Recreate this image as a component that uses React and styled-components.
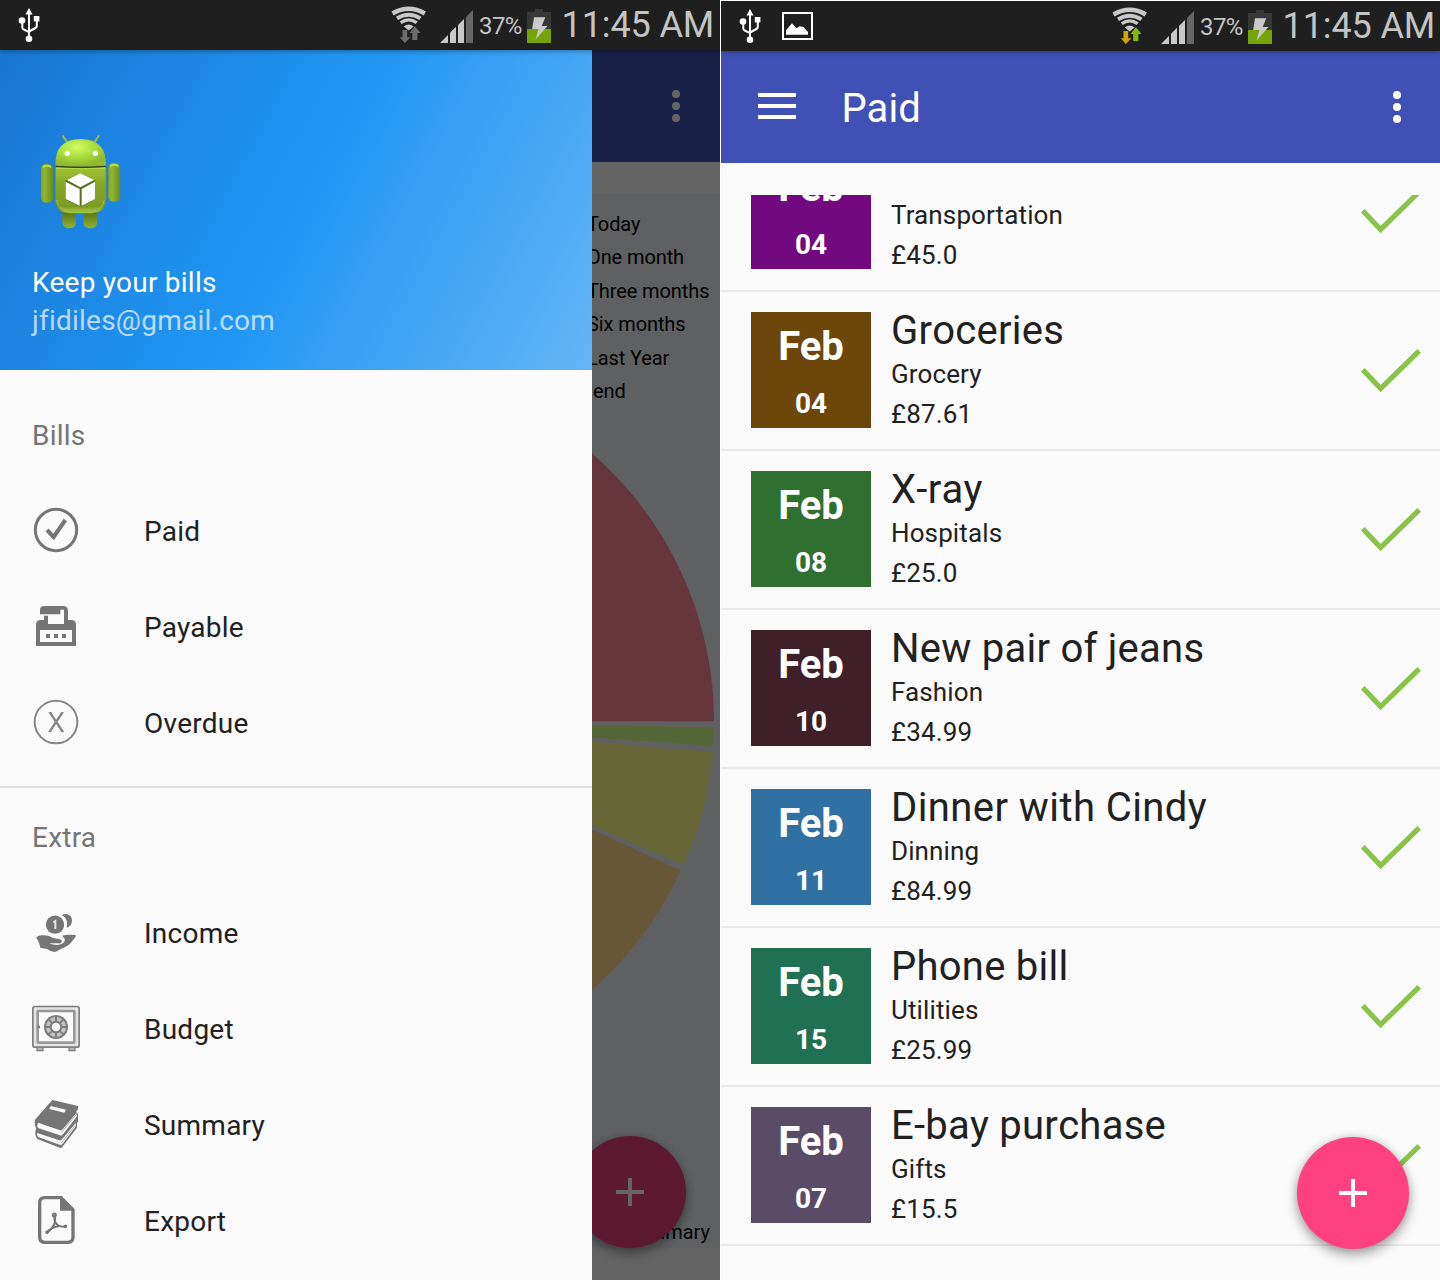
import React from "react";
import styled, { createGlobalStyle } from "styled-components";

const GlobalStyle = createGlobalStyle`
  *, *::before, *::after { box-sizing: border-box; }
  body { margin: 0; background: #fff; font-family: Roboto, "Noto Sans", sans-serif; color: #212121; }
  svg { display: block; flex: none; }
`;

const Screens = styled.main`
  display: grid;
  grid-template-columns: 720px 719px;
  column-gap: 1px;
  width: 1440px;
  height: 1280px;
  overflow: hidden;
  background: #fff;
`;

const Phone = styled.section`
  position: relative;
  display: flex;
  flex-direction: column;
  height: ${(p) => 1280 - (p.$top || 0)}px;
  margin-top: ${(p) => p.$top || 0}px;
  overflow: hidden;
  background: #fafafa;
`;

const StatusBarRoot = styled.header`
  position: relative;
  z-index: 5;
  flex: none;
  display: flex;
  align-items: flex-start;
  width: 720px;
  height: 50px;
  background: #1f1f1f;
  color: #c4c4c4;
  box-shadow: 0 1px 5px rgba(0, 0, 0, 0.35);
`;

const StatusRight = styled.div`
  display: flex;
  margin-left: auto;
  width: 330px;
`;

const Percent = styled.span`
  width: 48px;
  padding: 12px 0 0 5px;
  font-size: 24px;
  line-height: 28px;
  letter-spacing: -0.6px;
`;

const Clock = styled.span`
  padding: 4px 0 0 9.5px;
  font-size: 36px;
  line-height: 42px;
  letter-spacing: -0.1px;
  white-space: nowrap;
`;

const Toolbar = styled.div`
  flex: none;
  display: flex;
  align-items: center;
  width: 720px;
  height: 112px;
  padding: 0 40px 0 37px;
  background: #3f51b5;
  color: #fff;
`;

const ToolbarTitle = styled.h1`
  margin: 2px 0 0 45.5px;
  font-size: 40px;
  line-height: 47px;
  font-weight: 400;
  letter-spacing: 0.1px;
`;

const MoreDots = styled.span`
  display: grid;
  gap: 4px;
  margin-left: auto;
  i { width: 8px; height: 8px; border-radius: 50%; background: #fff; }
`;

const SummaryCard = styled.div`
  display: flex;
  flex-direction: column;
  height: 1054px;
  margin-top: 32px;
  background: #eef1f4;
`;

const Legend = styled.ul`
  list-style: none;
  margin: 0;
  padding: 14px 0 0 587px;
  height: 258px;
  font-size: 20px;
  line-height: 33.4px;
  letter-spacing: -0.1px;
  color: #000;
  white-space: nowrap;
`;

const LegendItem = styled.li`
  padding-left: ${(p) => p.$indent || 0}px;
`;

const ChartCaption = styled.p`
  margin: auto 10px 4px auto;
  font-size: 20px;
  line-height: 24px;
  color: #000;
`;

const Scrim = styled.div`
  position: absolute;
  inset: 50px 0 0 0;
  z-index: 3;
  background: rgba(0, 0, 0, 0.6);
`;

const Drawer = styled.nav`
  position: absolute;
  left: 0;
  top: 50px;
  bottom: 0;
  z-index: 4;
  width: 592px;
  background: #fafafa;
`;

const DrawerHeader = styled.div`
  display: flex;
  flex-direction: column;
  height: 320px;
  padding: 82px 32px 0;
  background: linear-gradient(118.4deg, #1976d2 0%, #2196f3 50%, #64b5f6 100%);
  font-size: 28px;
  line-height: 38px;
  letter-spacing: 0.24px;
  color: #fff;
`;

const AccountName = styled.div`
  margin-top: 30px;
`;

const AccountMail = styled.div`
  color: rgba(255, 255, 255, 0.7);
`;

const MenuGroup = styled.div`
  padding: ${(p) => (p.$first ? "16px 0" : "0")};
  border-bottom: ${(p) => (p.$first ? "2px solid #e0e0e0" : "0")};
`;

const GroupLabel = styled.h2`
  margin: 0;
  height: 96px;
  padding: 2px 32px 0;
  font-size: 28px;
  font-weight: 400;
  line-height: 96px;
  letter-spacing: 0.24px;
  color: #757575;
`;

const MenuItem = styled.a`
  display: flex;
  align-items: center;
  gap: 64px;
  height: 96px;
  padding: 0 32px;
  font-size: 28px;
  line-height: 33px;
  letter-spacing: 0.24px;
  span { padding-top: 3px; }
`;

const FabButton = styled.button`
  position: absolute;
  left: ${(p) => p.$x}px;
  top: 1136px;
  z-index: 2;
  display: grid;
  place-items: center;
  width: 112px;
  height: 112px;
  padding: 0;
  border: 0;
  border-radius: 50%;
  background: ${(p) => p.$color};
  box-shadow: 0 6px 12px rgba(0, 0, 0, 0.32), 0 0 10px rgba(0, 0, 0, 0.14);
`;

const BillList = styled.ul`
  flex: 1;
  min-height: 0;
  margin: 32px 0 0;
  padding: 0;
  list-style: none;
  overflow: hidden;
`;

const BillRow = styled.li`
  display: flex;
  height: 159px;
  padding: 20px 18px 0 30px;
  border-bottom: 2px solid #ece7e9;
  &:first-child { margin-top: -62px; }
`;

const DateTile = styled.div`
  width: 120px;
  height: 116px;
  padding-top: 11px;
  background: ${(p) => p.$color};
  color: #fff;
  font-weight: 700;
  text-align: center;
`;

const Month = styled.div`
  font-size: 40px;
  line-height: 47px;
`;

const Day = styled.div`
  margin-top: 17px;
  font-size: 28px;
  line-height: 33px;
`;

const BillText = styled.div`
  flex: 1;
  margin: -5px 0 0 20px;
`;

const BillTitle = styled.h3`
  margin: 0;
  font-size: 40px;
  line-height: 47px;
  font-weight: 400;
  font-kerning: none;
  letter-spacing: ${(p) => p.$tracking || 0.25}px;
`;

const BillMeta = styled.div`
  font-size: 26px;
  line-height: 40px;
  letter-spacing: 0.12px;
`;

const TickBox = styled.div`
  padding-top: 36px;
`;

const UsbIcon = () => (
  <svg width="60" height="50" viewBox="0 0 60 50" fill="#fff">
    <path d="M29 8l3.5 6.5h-7z" />
    <path d="M29 12v26M22.3 21v6.5q0 1.5 1.5 2l5.2 2.6M36.8 20v6q0 1.3-1.4 2l-6.4 3.5" fill="none" stroke="#fff" strokeWidth="2" />
    <circle cx="22" cy="20.6" r="3.3" />
    <rect x="33.8" y="16" width="5.6" height="5.4" />
    <circle cx="29" cy="38.8" r="3.3" />
  </svg>
);

const PictureIcon = () => (
  <svg width="34" height="50" viewBox="60 0 34 50">
    <rect x="62" y="12" width="29" height="26" fill="none" stroke="#fff" strokeWidth="2" />
    <path d="M65 33.7v-4.5l6-7 4.5 5 3-2 4 .8 4.5 5v2.7z" fill="#fff" />
  </svg>
);

const SignalIcons = ({ active }) => (
  <svg width="84" height="50" viewBox="390 0 84 50">
    <g fill="none" stroke="#c8c8c8">
      <path d="M392.6 13.4Q408.7 4.2 424.8 13.4" strokeWidth="4.6" />
      <path d="M397 18.4Q408.7 11 420.4 18.4" strokeWidth="3.9" />
      <path d="M400.7 22.7Q408.7 17 416.7 22.7" strokeWidth="3.3" />
    </g>
    <path d="M403.8 26.6q4.9-4 9.8 0l-4.9 4z" fill="#c8c8c8" />
    <path d="M402.5 30h4.7v7.3h3.3l-5.7 5.7-5-5.7h2.7z" fill={active ? "#cda30e" : "#6c6c6c"} />
    <path d="M414.9 26.3l5.7 6.7h-3.2v7h-5.2v-7h-2.6z" fill={active ? "#80bb0c" : "#6c6c6c"} />
    <g fill="#c8c8c8">
      <path d="M440 43l8-8v8z" />
      <path d="M450 43V32.7l6-6V43z" />
      <path d="M458 43V25l6-6v24z" />
    </g>
    <path d="M466 43V17l7-7v33z" fill="#666" />
  </svg>
);

const BatteryIcon = () => (
  <svg width="30" height="50" viewBox="522 0 30 50">
    <path d="M527 12h8V9h8v3h8v31h-24z" fill="#383838" />
    <path d="M527 29h24v14h-24z" fill="#76a408" />
    <path d="M534 17.3h11.3l-3.6 8.7h5.8l-12 13.6 3-10.6h-6.3z" fill="#cacaca" />
  </svg>
);

const StatusBar = ({ picture, active }) => (
  <StatusBarRoot>
    <UsbIcon />
    {picture && <PictureIcon />}
    <StatusRight>
      <SignalIcons active={active} />
      <Percent>37%</Percent>
      <BatteryIcon />
      <Clock>11:45 AM</Clock>
    </StatusRight>
  </StatusBarRoot>
);

const HamburgerIcon = () => (
  <svg width="38" height="28" viewBox="0 0 38 28" fill="#fff">
    <path d="M0 0h38v4H0zM0 11h38v4H0zM0 22h38v4H0z" />
  </svg>
);

const More = () => (
  <MoreDots>
    <i />
    <i />
    <i />
  </MoreDots>
);

const Fab = ({ x, color }) => (
  <FabButton $x={x} $color={color}>
    <svg width="28" height="28" viewBox="0 0 28 28" fill="#fff">
      <path d="M12 0h4v12h12v4H16v12h-4V16H0v-4h12z" />
    </svg>
  </FabButton>
);

const PieChart = () => (
  <svg width="720" height="560" viewBox="0 452 720 560">
    <path d="M359 721.3V366.3A355 355 0 0 1 714 721.3z" fill="#ff8796" />
    <path d="M592 724.9L714 727.2Q713.9 737 713.2 745.8L592 737.4z" fill="#d2ff84" />
    <path d="M592 741.8L712.8 751.9A355 355 0 0 1 683.8 864.8L592 825.2z" fill="#ffff87" />
    <path d="M592 829.6L680.7 870.6A355 355 0 0 1 592 990z" fill="#ffd987" />
  </svg>
);

const Robot = () => (
  <svg width="96" height="102" viewBox="96 396 288 306">
    <defs>
      <linearGradient id="limb" x1="0" x2="1" y1="0" y2="0">
        <stop offset="0" stopColor="#86a52d" />
        <stop offset=".3" stopColor="#94b52f" />
        <stop offset="1" stopColor="#6c8a1f" />
      </linearGradient>
      <linearGradient id="torso" x1="0" x2="0" y1="0" y2="1">
        <stop offset="0" stopColor="#a0c233" />
        <stop offset=".4" stopColor="#86a626" />
        <stop offset=".85" stopColor="#7d9b22" />
        <stop offset="1" stopColor="#aed046" />
      </linearGradient>
      <radialGradient id="head" cx=".42" cy=".3" r=".65">
        <stop offset="0" stopColor="#d3fb66" />
        <stop offset=".5" stopColor="#aee03f" />
        <stop offset="1" stopColor="#92b930" />
      </radialGradient>
      <linearGradient id="leg" x1="0" x2="0" y1="0" y2="1">
        <stop offset="0" stopColor="#566d18" />
        <stop offset="1" stopColor="#91b32f" />
      </linearGradient>
    </defs>
    <path d="M189 408l14 21M296 408l-14 21" stroke="#a5ba35" strokeWidth="6" strokeLinecap="round" />
    <path d="M187 632h41v38q-2 15-20 15t-21-15zM250 632h41v38q-2 15-20 15t-21-15z" fill="url(#leg)" />
    <rect x="123" y="492" width="36" height="116" rx="15" fill="url(#limb)" stroke="#6f8f25" />
    <rect x="325" y="489" width="35" height="116" rx="15" fill="url(#limb)" stroke="#6f8f25" />
    <path d="M131 500q10-6 20 0M333 497q10-6 20 0" fill="none" stroke="#b4de4c" strokeWidth="6" strokeLinecap="round" />
    <path d="M166 502h152v92q0 46-46 46h-60q-46 0-46-46z" fill="url(#torso)" stroke="#708e20" strokeWidth="2" />
    <path d="M169 504h146" stroke="#bbdc53" strokeWidth="4" />
    <path d="M170 600q5 30 44 34h58q36-4 41-34" fill="none" stroke="#9dbd42" strokeWidth="3" />
    <path d="M166 497q-2-79 76-80 78 1 76 80-76 7-152 0z" fill="url(#head)" />
    <path d="M167 499q75 6 150 0" fill="none" stroke="#2f3d0a" strokeWidth="4" />
    <circle cx="202" cy="460" r="8" fill="#fff" />
    <circle cx="286" cy="460" r="8" fill="#fff" />
    <path d="M241 520l44 22v56l-44 22-45-22v-56z" fill="#58701a" />
    <path d="M241 520l41 20-41 22-40-22zM197 545l42 22v50l-42-20zM285 545l-40 22v50l40-20z" fill="#fff" />
  </svg>
);

const GREY = "#757575";

const PaidIcon = () => (
  <svg width="48" height="48" viewBox="96 78 144 144" fill="none" stroke={GREY}>
    <circle cx="168" cy="150" r="62" strokeWidth="9" />
    <path d="M141 150l20 21 35-51" strokeWidth="12" />
  </svg>
);

const PayableIcon = () => (
  <svg width="48" height="48" viewBox="96 366 144 144" fill={GREY}>
    <path fillRule="evenodd" d="M120 403v-13q0-12 12-12h58q14 0 14 14v28h12q12 2 12 14v64H108v-64q0-12 12-14h12v-13h12v25h48v-43h-11v14zM120 450v36h96v-36z" />
    <path d="M138 462h12v12h-12zM162 462h12v12h-12zM186 462h12v12h-12z" />
  </svg>
);

const OverdueIcon = () => (
  <svg width="48" height="48" viewBox="96 654 144 144" fill="none" stroke="#868686">
    <circle cx="168" cy="726" r="64" strokeWidth="6" />
    <path d="M150 698l38 57M187 698l-38 57" strokeWidth="7.5" />
    <path d="M146 698h9M182 698h9M145 755h9M183 755h9" strokeWidth="3" />
  </svg>
);

const IncomeIcon = () => (
  <svg width="48" height="48" viewBox="96 54 144 144" fill={GREY}>
    <path d="M185 75q8-4 15-3 16 4 16 20-1 16-16 21 2-8 1-17-3-14-16-21z" />
    <circle cx="165" cy="104" r="27.5" />
    <path d="M160 97l6-4v24" fill="none" stroke="#e4e4e4" strokeWidth="6" />
    <path d="M109 143q3-6 18-7 19-2 32 8l22 4q6 3 4 8-2 5-9 4l-28 0q20 9 38 1 10-5 8-15l-8-9q18-5 40-2 3 1 0 7l-16 19q-10 9-22 14-10 4-20 10h-9q-9-2-17-8l-18-3q-5 0-4-6-1-8-7-18z" />
  </svg>
);

const BudgetIcon = () => (
  <svg width="48" height="48" viewBox="96 342 144 144" fill="none" stroke="#7d7d7d">
    <rect x="98.5" y="349.5" width="139" height="122" rx="6" fill="#e3e3e3" strokeWidth="5" />
    <rect x="113" y="363" width="110" height="95" rx="3" fill="#fafafa" stroke="#999" strokeWidth="8" />
    <circle cx="168" cy="411" r="24" stroke="#c4c4c4" strokeWidth="14" />
    <circle cx="168" cy="411" r="33" strokeWidth="6" />
    <circle cx="168" cy="411" r="16" strokeWidth="6" />
    <path d="M168 378v18M168 426v18M135 411h18M183 411h18M145 388l12 12M191 388l-12 12M145 434l12-12M191 434l-12-12" strokeWidth="6" />
    <path d="M112 411h8" strokeWidth="8" />
    <path d="M111 474v8h18v-8M207 474v8h18v-8" fill="#b5b5b5" strokeWidth="4" />
  </svg>
);

const SummaryIcon = () => (
  <svg width="48" height="48" viewBox="96 630 144 144">
    <path d="M157 630l77 18q2 5-1 11l-5 6 6 8v22l-3 4v14l-44 58q-3 4-8 2l-67-26q-9-12-5-26l2-6q-7-12-4-26z" fill={GREY} />
    <path d="M114 698l66 23q5 1 9-4l40-48 2 10-42 54q-4 5-9 3l-66-22q-4-7 0-16zM112 729l66 22q5 1 9-4l40-48 1 9-40 53q-4 5-9 3l-65-23q-5-5-2-12z" fill="#fafafa" />
    <path d="M184 728l44-54M184 759l43-55" stroke="#b0b0b0" strokeWidth="3" />
    <path d="M152 648l46 11-5 9-45-11z" fill="#fafafa" />
  </svg>
);

const ExportIcon = () => (
  <svg width="48" height="48" viewBox="96 918 144 144" fill="none" stroke={GREY}>
    <path d="M134 923h49l36 36v83q0 15-15 15h-70q-15 0-15-15v-104q0-15 15-15z" strokeWidth="10" />
    <path d="M180 923l39 39h-39z" fill={GREY} stroke="none" />
    <path d="M164 976q5 23-8 37-5 9-16 16M163 981q-1 16 11 25 12 6 23 3M140 1027q16-16 36-18" strokeWidth="6" />
    <circle cx="163" cy="975" r="4.5" strokeWidth="6" />
    <circle cx="196" cy="1009" r="3" strokeWidth="5" />
    <circle cx="141" cy="1027" r="3" strokeWidth="5" />
  </svg>
);

const Tick = () => (
  <svg width="62" height="46" viewBox="1360 348 62 46" fill="none" stroke="#8bc34a" strokeWidth="5.2">
    <path d="M1362.8 369.8L1380.6 388.6L1419.2 350.8" />
  </svg>
);

const billItems = [
  ["Paid", PaidIcon],
  ["Payable", PayableIcon],
  ["Overdue", OverdueIcon],
];

const extraItems = [
  ["Income", IncomeIcon],
  ["Budget", BudgetIcon],
  ["Summary", SummaryIcon],
  ["Export", ExportIcon],
];

const bills = [
  { month: "Feb", day: "04", color: "#720981", title: "", category: "Transportation", amount: "£45.0" },
  { month: "Feb", day: "04", color: "#6d460c", title: "Groceries", category: "Grocery", amount: "£87.61" },
  { month: "Feb", day: "08", color: "#2f6f30", title: "X-ray", category: "Hospitals", amount: "£25.0" },
  { month: "Feb", day: "10", color: "#3f2029", title: "New pair of jeans", category: "Fashion", amount: "£34.99" },
  { month: "Feb", day: "11", color: "#3070a2", title: "Dinner with Cindy", tracking: 0.42, category: "Dinning", amount: "£84.99" },
  { month: "Feb", day: "15", color: "#207153", title: "Phone bill", category: "Utilities", amount: "£25.99" },
  { month: "Feb", day: "07", color: "#5a4c66", title: "E-bay purchase", category: "Gifts", amount: "£15.5" },
];

const Menu = ({ items }) =>
  items.map(([label, Icon]) => (
    <MenuItem key={label}>
      <Icon />
      <span>{label}</span>
    </MenuItem>
  ));

export default function App() {
  return (
    <>
      <GlobalStyle />
      <Screens>
        <Phone>
          <StatusBar />
          <Toolbar>
            <More />
          </Toolbar>
          <SummaryCard>
            <Legend>
              <LegendItem>Today</LegendItem>
              <LegendItem>One month</LegendItem>
              <LegendItem>Three months</LegendItem>
              <LegendItem>Six months</LegendItem>
              <LegendItem>Last Year</LegendItem>
              <LegendItem $indent={6}>end</LegendItem>
            </Legend>
            <PieChart />
            <ChartCaption>Summary</ChartCaption>
          </SummaryCard>
          <Fab x={574} color="#e64076" />
          <Scrim />
          <Drawer>
            <DrawerHeader>
              <Robot />
              <AccountName>Keep your bills</AccountName>
              <AccountMail>jfidiles@gmail.com</AccountMail>
            </DrawerHeader>
            <MenuGroup $first>
              <GroupLabel>Bills</GroupLabel>
              <Menu items={billItems} />
            </MenuGroup>
            <MenuGroup>
              <GroupLabel>Extra</GroupLabel>
              <Menu items={extraItems} />
            </MenuGroup>
          </Drawer>
        </Phone>
        <Phone $top={1}>
          <StatusBar picture active />
          <Toolbar>
            <HamburgerIcon />
            <ToolbarTitle>Paid</ToolbarTitle>
            <More />
          </Toolbar>
          <BillList>
            {bills.map((b, i) => (
              <BillRow key={i}>
                <DateTile $color={b.color}>
                  <Month>{b.month}</Month>
                  <Day>{b.day}</Day>
                </DateTile>
                <BillText>
                  <BillTitle $tracking={b.tracking}>{b.title || "\u00a0"}</BillTitle>
                  <BillMeta>{b.category}</BillMeta>
                  <BillMeta>{b.amount}</BillMeta>
                </BillText>
                <TickBox>
                  <Tick />
                </TickBox>
              </BillRow>
            ))}
          </BillList>
          <Fab x={576} color="#ff4081" />
        </Phone>
      </Screens>
    </>
  );
}
